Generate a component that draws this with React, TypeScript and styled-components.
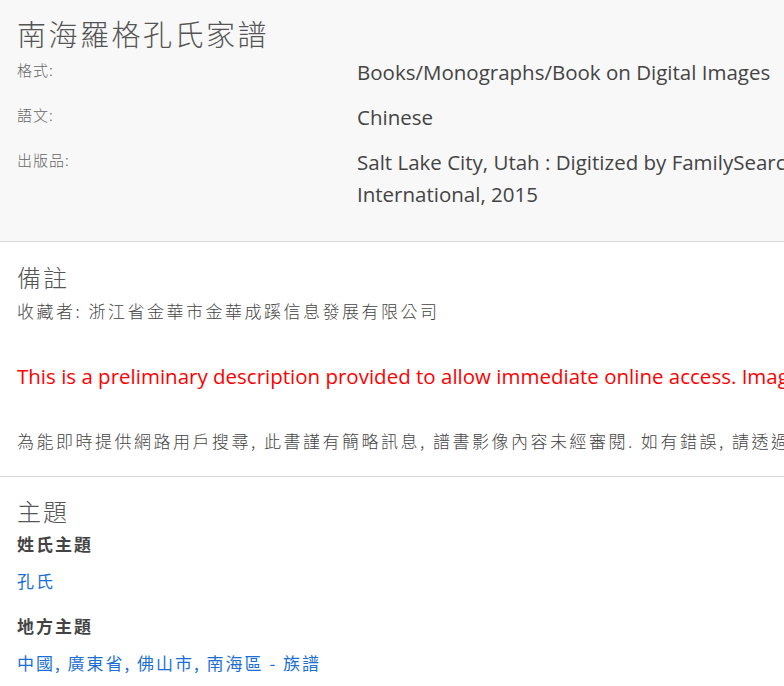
import styled, { createGlobalStyle } from "styled-components"

const GlobalStyle = createGlobalStyle`
  html, body {
    margin: 0;
    padding: 0;
    background: #fff;
    overflow: hidden;
  }
  body {
    font-family: "Open Sans", "Noto Sans CJK TC", sans-serif;
    color: #333;
  }
`

const Page = styled.div`
  width: 1100px;
`

const Summary = styled.section`
  display: flex;
  flex-direction: column;
  gap: 13px;
  background-color: #f8f8f8;
  padding: 13px 17px 31px;
  border-bottom: 1px solid #d6d6d6;
`

const Title = styled.h1`
  margin: 0 0 -10px;
  font-family: "Noto Sans CJK TC", sans-serif;
  font-weight: 300;
  font-size: 29px;
  letter-spacing: 2.5px;
  line-height: 40px;
  color: #555;
`

const InfoRow = styled.div`
  display: grid;
  grid-template-columns: 340px 490px;
`

const InfoLabel = styled.div`
  font-family: "Noto Sans CJK TC", sans-serif;
  font-weight: 300;
  font-size: 15px;
  letter-spacing: 1px;
  line-height: 28px;
  color: #666;
`

const InfoValue = styled.div`
  font-family: "Open Sans", sans-serif;
  font-size: 20.5px;
  line-height: 32px;
  color: #444;
`

const Section = styled.section<{ $last?: boolean }>`
  padding: ${(p) => (p.$last ? "16px 17px 0" : "17px 17px 19px")};
  border-bottom: 1px solid ${(p) => (p.$last ? "transparent" : "#d6d6d6")};
`

const SectionTitle = styled.h2`
  margin: 0;
  font-family: "Noto Sans CJK TC", sans-serif;
  font-weight: 300;
  font-size: 24px;
  letter-spacing: 2px;
  line-height: 36px;
  color: #555;
`

const Note = styled.p<{ $gap?: number }>`
  margin: ${(p) => p.$gap ?? 0}px 0 0;
  font-family: "Noto Sans CJK TC", sans-serif;
  font-weight: 300;
  font-size: 17px;
  letter-spacing: 2.5px;
  line-height: 32px;
  color: #444;
  white-space: nowrap;
`

const Warning = styled.p`
  margin: 34px 0 0;
  font-family: "Open Sans", sans-serif;
  font-size: 20.5px;
  line-height: 30px;
  color: #f00;
  white-space: nowrap;
`

const SubHeading = styled.h3<{ $gap?: number }>`
  margin: ${(p) => p.$gap ?? 0}px 0 0;
  font-family: "Noto Sans CJK TC", sans-serif;
  font-weight: 700;
  font-size: 17px;
  letter-spacing: 2px;
  line-height: 30px;
  color: #444;
`

const LinkLine = styled.a`
  display: block;
  margin-top: 7px;
  font-family: "Noto Sans CJK TC", sans-serif;
  font-size: 17px;
  letter-spacing: 2px;
  line-height: 30px;
  color: #1a6fd6;
  text-decoration: none;
`

const info = [
  { label: "格式:", value: "Books/Monographs/Book on Digital Images" },
  { label: "語文:", value: "Chinese" },
  { label: "出版品:", value: "Salt Lake City, Utah : Digitized by FamilySearch International, 2015" },
]

export default function App() {
  return (
    <Page>
      <GlobalStyle />
      <Summary>
        <Title>南海羅格孔氏家譜</Title>
        {info.map((row) => (
          <InfoRow key={row.label}>
            <InfoLabel>{row.label}</InfoLabel>
            <InfoValue>{row.value}</InfoValue>
          </InfoRow>
        ))}
      </Summary>
      <Section>
        <SectionTitle>備註</SectionTitle>
        <Note>收藏者: 浙江省金華市金華成蹊信息發展有限公司</Note>
        <Warning>This is a preliminary description provided to allow immediate online access. Images have not been reviewed.</Warning>
        <Note $gap={34}>為能即時提供網路用戶搜尋, 此書謹有簡略訊息, 譜書影像內容未經審閱. 如有錯誤, 請透過意見回饋</Note>
      </Section>
      <Section $last>
        <SectionTitle>主題</SectionTitle>
        <SubHeading>姓氏主題</SubHeading>
        <LinkLine href="#">孔氏</LinkLine>
        <SubHeading $gap={15}>地方主題</SubHeading>
        <LinkLine href="#">中國, 廣東省, 佛山市, 南海區 - 族譜</LinkLine>
      </Section>
    </Page>
  )
}
